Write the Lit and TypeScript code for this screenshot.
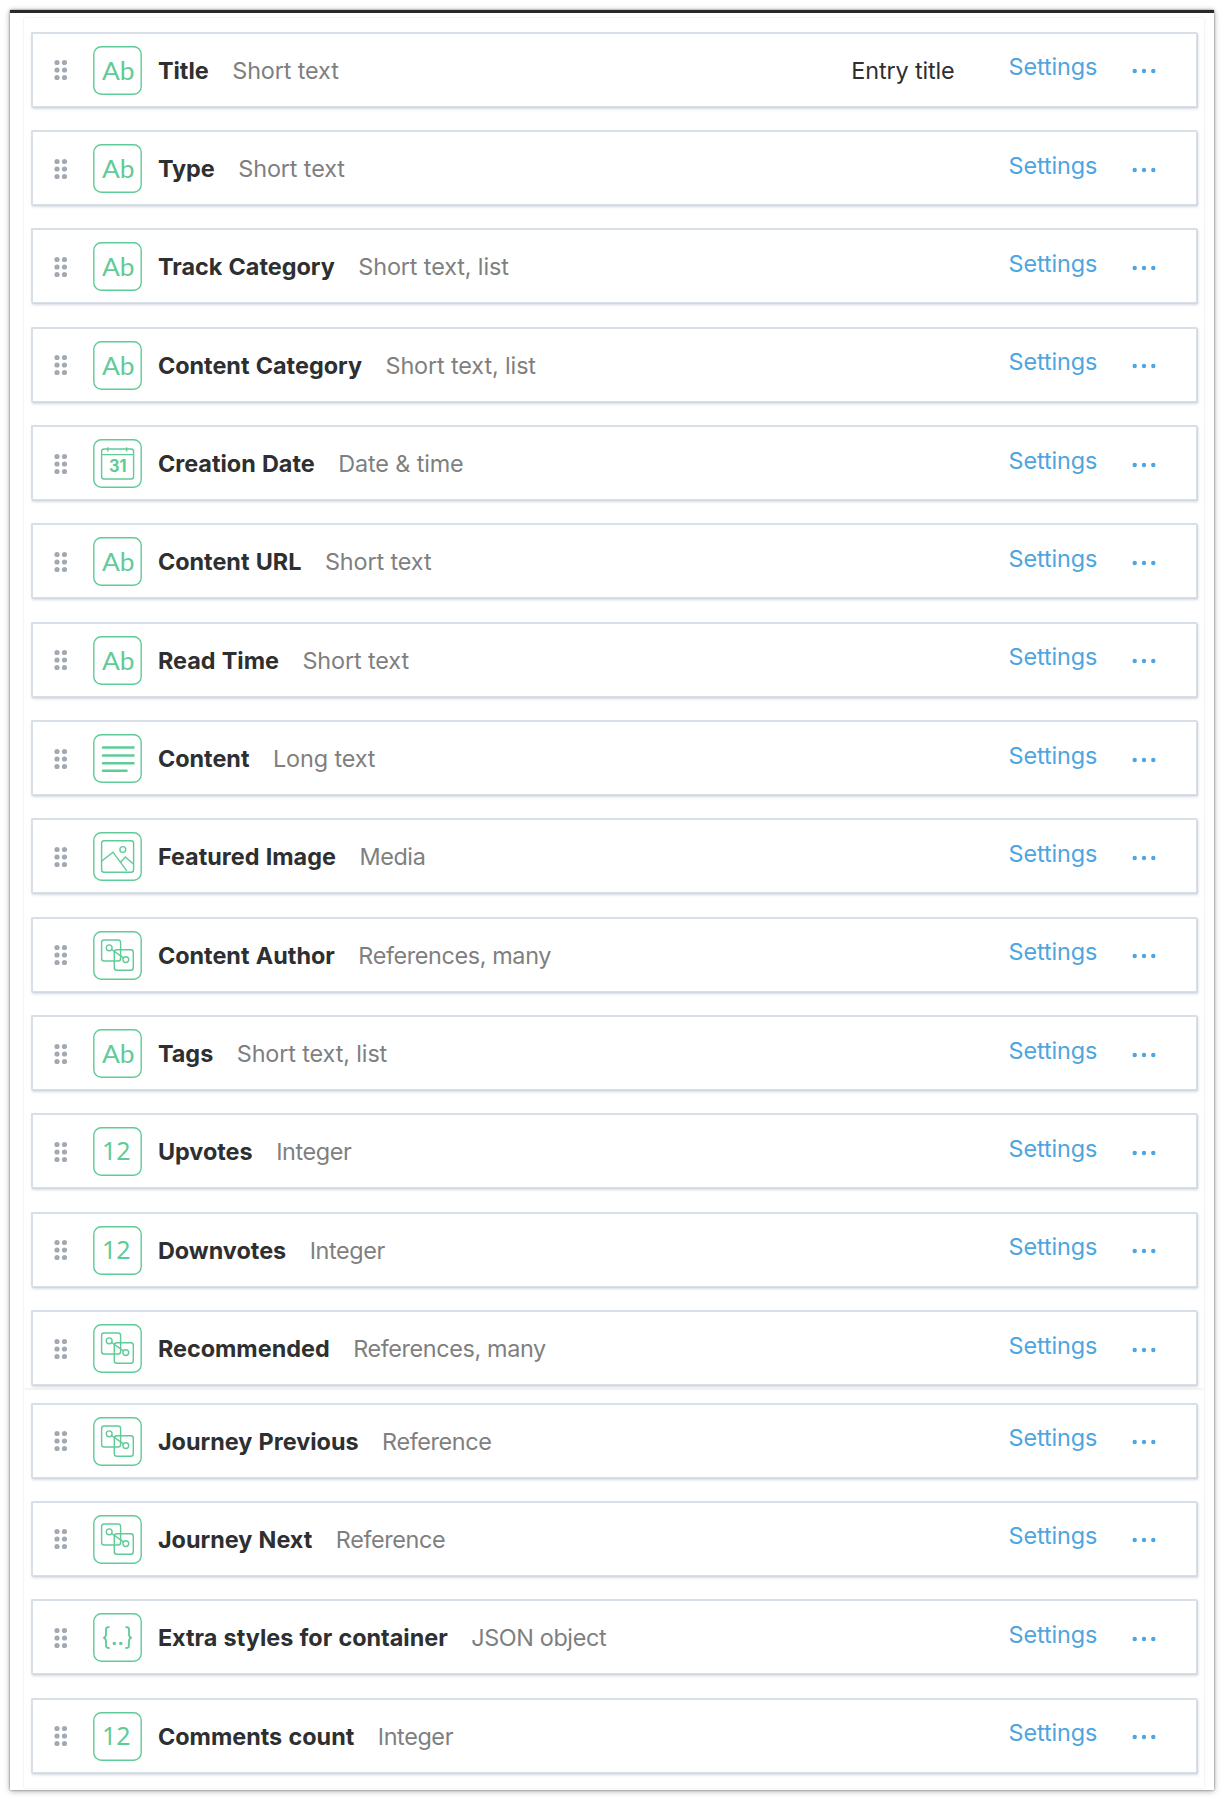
import { LitElement, html, css, svg } from "lit";
import { customElement, property } from "lit/decorators.js";
import { classMap } from "lit/directives/class-map.js";

type IconKind = "text" | "date" | "long" | "media" | "ref" | "int" | "json";
interface Field { name: string; type: string; icon: IconKind; entryTitle?: boolean; }

const main: Field[] = [
  { name: "Title", type: "Short text", icon: "text", entryTitle: true },
  { name: "Type", type: "Short text", icon: "text" },
  { name: "Track Category", type: "Short text, list", icon: "text" },
  { name: "Content Category", type: "Short text, list", icon: "text" },
  { name: "Creation Date", type: "Date & time", icon: "date" },
  { name: "Content URL", type: "Short text", icon: "text" },
  { name: "Read Time", type: "Short text", icon: "text" },
  { name: "Content", type: "Long text", icon: "long" },
  { name: "Featured Image", type: "Media", icon: "media" },
  { name: "Content Author", type: "References, many", icon: "ref" },
  { name: "Tags", type: "Short text, list", icon: "text" },
  { name: "Upvotes", type: "Integer", icon: "int" },
  { name: "Downvotes", type: "Integer", icon: "int" },
  { name: "Recommended", type: "References, many", icon: "ref" },
];
const extra: Field[] = [
  { name: "Journey Previous", type: "Reference", icon: "ref" },
  { name: "Journey Next", type: "Reference", icon: "ref" },
  { name: "Extra styles for container", type: "JSON object", icon: "json" },
  { name: "Comments count", type: "Integer", icon: "int" },
];

const glyphs = {
  text: svg`<text class="ab" x="9" y="34.2" textLength="32.5" lengthAdjust="spacingAndGlyphs">Ab</text>`,
  int: svg`<text class="num" x="9" y="33.4" textLength="28.5">12</text>`,
  date: svg`<rect x="8.6" y="10" width="32" height="30" rx="2.5"/><path d="M8.6 15.6h32M14.8 8.2v4.4M33.6 8.2v4.4"/>
    <text class="day" x="16" y="33" textLength="17.5" lengthAdjust="spacingAndGlyphs">31</text>`,
  long: svg`<path class="thick" d="M10 13.5h30.5M10 21.4h30.5M10 29.2h30.5M10 36.7h23.5"/>`,
  media: svg`<rect x="8.6" y="8.8" width="32" height="31.5" rx="2.5"/><circle cx="29.8" cy="17.5" r="2.9"/>
    <path d="M8.8 29L20 20.2L33.8 38.8M27.6 30.2L32.4 25L40.4 32"/>`,
  ref: svg`<rect x="8.6" y="9" width="19" height="21" rx="2.5"/><rect x="21.3" y="18.8" width="19" height="20.4" rx="2.5"/>
    <circle cx="16.2" cy="16.8" r="2.9"/><circle cx="32.8" cy="28.6" r="2.9"/><path d="M18.6 18.5L30.4 26.9"/>`,
  json: svg`<path class="brace" d="M16.6 14.2h-1.2q-2.4 0-2.4 2.4v5q0 2.8-2.6 3.2q2.6.4 2.6 3.2v4.6q0 2.4 2.4 2.4h1.2M32.4 14.2h1.2q2.4 0 2.4 2.4v5q0 2.8 2.6 3.2q-2.6.4-2.6 3.2v4.6q0 2.4-2.4 2.4h-1.2"/>
    <circle class="dot" cx="21.3" cy="30.4" r="1.7"/><circle class="dot" cx="27.8" cy="30.4" r="1.7"/>`,
};

@customElement("field-row")
export class FieldRow extends LitElement {
  @property({ attribute: false }) field!: Field;
  static styles = css`
    :host { display: block; height: 75px; box-sizing: border-box; background: #fff;
      border: solid #d9dfe7; border-width: 2px 1px 1px 2px;
      box-shadow: 1px 1px 1px #d0d7e0, 1px 2px 3px rgba(60, 80, 110, .2); border-radius: 1px; }
    .row { display: flex; align-items: center; height: 72px; padding: 0 40px 0 20px; white-space: nowrap;
      font-family: Inter, "Liberation Sans", sans-serif; font-size: 23.4px; line-height: 30px; }
    .handle { width: 14px; height: 22px; fill: #a3a9b2; margin: 1px 25.5px 0 0; flex: none; }
    .icon { width: 49px; height: 49px; margin: 1px 16.4px 0 0; flex: none; overflow: visible; fill: none;
      stroke: #5fcb97; stroke-width: 1.4; }
    .icon text { fill: #5fcb97; stroke: none; }
    .ab { font: 24.5px Lato, sans-serif; }
    .num { font: 25px "Noto Sans", sans-serif; }
    .day { font: 700 17px Inter, sans-serif; }
    .thick { stroke-width: 2.5; stroke-linecap: round; }
    .brace { stroke-width: 1.8; }
    .dot { fill: #5fcb97; stroke: none; }
    .name, .type, .title { padding-top: 2px; }
    .name { font-weight: 700; color: #2d2f31; letter-spacing: 0; word-spacing: .7px; margin-right: 23.5px; }
    .type { color: #7f7f7f; letter-spacing: -.38px; flex: 1; }
    .type.short { letter-spacing: -.12px; }
    .title { color: #2d2f31; letter-spacing: -.14px; margin-right: 54px; }
    .settings { color: #4ea5e0; letter-spacing: -.1px; padding-bottom: 5px; width: 89px; margin-right: 34.5px; }
    .more { width: 24px; height: 6px; fill: #4ea5e0; margin-top: 3px; flex: none; }
  `;
  render() {
    const f = this.field;
    return html`<div class="row">
      <svg class="handle" viewBox="0 0 14 22">${[3.5, 11, 18.5].map((y) => [4, 11.5].map((x) => svg`<circle cx=${x} cy=${y} r="2.6"/>`))}</svg>
      <svg class="icon" viewBox="0 0 49 49"><rect x=".8" y=".8" width="47.4" height="47.4" rx="7.5"/>${glyphs[f.icon]}</svg>
      <span class="name">${f.name}</span>
      <span class=${classMap({ type: true, short: /text|time/.test(f.type) })}>${f.type}</span>
      ${f.entryTitle ? html`<span class="title">Entry title</span>` : ""}
      <span class="settings">Settings</span>
      <svg class="more" viewBox="0 0 24 6"><circle cx="2.7" cy="3" r="2.2"/><circle cx="12" cy="3" r="2.2"/><circle cx="21.3" cy="3" r="2.2"/></svg>
    </div>`;
  }
}

@customElement("app-root")
export class AppRoot extends LitElement {
  static styles = css`
    :host { display: block; box-sizing: border-box; height: 1800px; padding: 10px; background: #fff; overflow: hidden; }
    .panel { box-sizing: border-box; height: 1780px; border-top: 3px solid #29292b; background: #fff; padding: 5px 10px 0 14px;
      box-shadow: 0 0 2px rgba(0, 0, 0, .45), 0 1px 6px rgba(0, 0, 0, .35); }
    .group { box-sizing: border-box; display: flex; flex-direction: column; gap: 23.33px; padding: 13.8px 7px 0;
      box-shadow: 0 0 2px rgba(0, 0, 0, .13); }
    .first { height: 1371px; }
    .second { height: 399px; padding-top: 13.6px; }
  `;
  render() {
    const rows = (list: Field[]) => list.map((f) => html`<field-row .field=${f}></field-row>`);
    return html`<div class="panel"><div class="group first">${rows(main)}</div><div class="group second">${rows(extra)}</div></div>`;
  }
}
